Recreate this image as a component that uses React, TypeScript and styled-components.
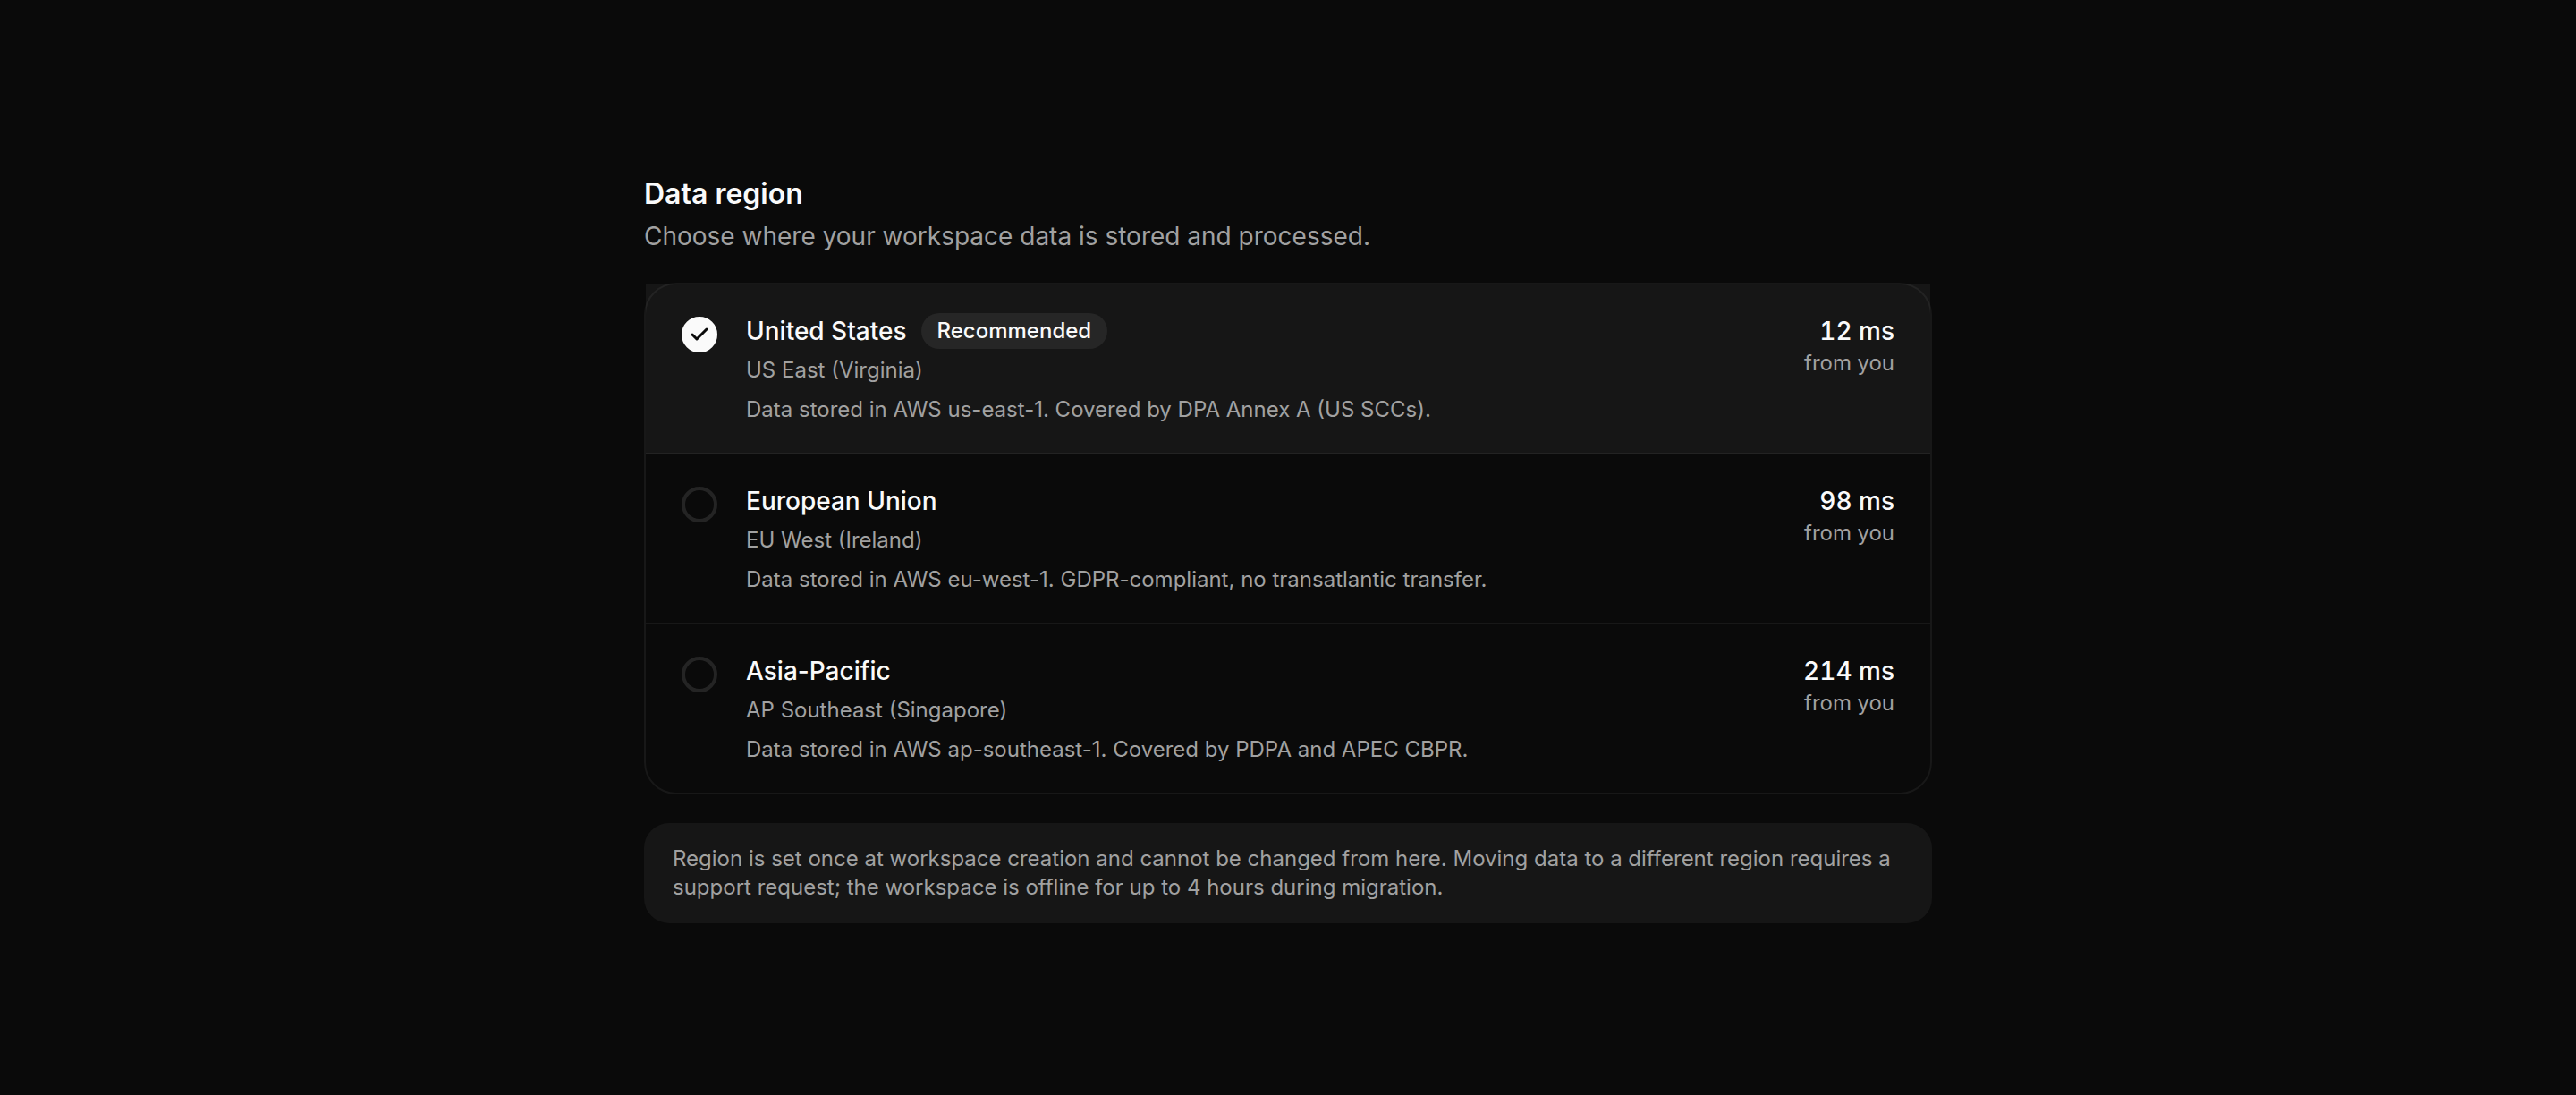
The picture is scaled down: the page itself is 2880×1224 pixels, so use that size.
import React, { useState } from "react";
import styled, { createGlobalStyle } from "styled-components";

const GlobalStyle = createGlobalStyle`
  *, *::before, *::after { box-sizing: border-box; }
  body {
    margin: 0;
    background: #0a0a0a;
    color: #fafafa;
    font-family: Inter, "Liberation Sans", sans-serif;
  }
`;

const Page = styled.main`
  display: flex;
  flex-direction: column;
  justify-content: center;
  min-height: 100vh;
  width: 100%;
  max-width: 1504px;
  margin: 0 auto;
  padding: 32px;
  gap: 32px;
`;

const Header = styled.header`
  display: flex;
  flex-direction: column;
  gap: 2px;
`;

const Title = styled.h1`
  margin: 0;
  font-size: 32px;
  line-height: 50px;
  font-weight: 600;
`;

const Subtitle = styled.p`
  margin: 0;
  font-size: 28px;
  line-height: 40px;
  color: #a1a1a1;
`;

const RegionList = styled.div`
  display: flex;
  flex-direction: column;
  border: 2px solid rgba(255, 255, 255, 0.06);
  border-radius: 36px;
`;

const RegionRow = styled.label<{ $selected: boolean }>`
  display: flex;
  align-items: flex-start;
  gap: 32px;
  padding: 32px 40px;
  cursor: pointer;
  background: ${(p) => (p.$selected ? "rgba(255, 255, 255, 0.05)" : "transparent")};

  &:not(:last-child) {
    border-bottom: 2px solid rgba(255, 255, 255, 0.06);
  }
`;

const RadioSlot = styled.span`
  display: grid;
  flex: none;
  margin-top: 4px;

  & > * {
    grid-area: 1 / 1;
    place-self: center;
  }
`;

const Radio = styled.input`
  appearance: none;
  width: 40px;
  height: 40px;
  margin: 0;
  border: 4px solid #242424;
  border-radius: 50%;
  cursor: pointer;

  &:checked {
    border-color: #fafafa;
    background: #fafafa;
  }
`;

const CheckMark = styled.svg`
  width: 24px;
  height: 24px;
  fill: none;
  stroke: #0a0a0a;
  stroke-width: 3;
  stroke-linecap: round;
  stroke-linejoin: round;
  pointer-events: none;
`;

const Details = styled.span`
  display: flex;
  flex: 1;
  flex-direction: column;
  min-width: 0;
`;

const NameLine = styled.span`
  display: flex;
  align-items: center;
  gap: 16px;
`;

const Strong = styled.span`
  font-size: 28px;
  line-height: 40px;
  font-weight: 500;
`;

const Badge = styled.span`
  padding: 4px 18px;
  border-radius: 20px;
  background: #262626;
  font-size: 24px;
  line-height: 32px;
  font-weight: 500;
`;

const Muted = styled.span`
  font-size: 24px;
  line-height: 32px;
  color: #a1a1a1;
`;

const Location = styled(Muted)`
  margin-top: 8px;
`;

const Storage = styled(Muted)`
  margin-top: 12px;
`;

const Latency = styled.span`
  display: flex;
  flex: none;
  flex-direction: column;
  align-items: flex-end;
  font-variant-numeric: tabular-nums;
`;

const Note = styled.p`
  margin: 0;
  padding: 24px 32px;
  border-radius: 28px;
  background: #161616;
  font-size: 24px;
  line-height: 32px;
  color: #a1a1a1;
`;

type Region = {
  id: string;
  name: string;
  location: string;
  storage: string;
  latency: number;
  recommended?: boolean;
};

const regions: Region[] = [
  {
    id: "us",
    name: "United States",
    location: "US East (Virginia)",
    storage: "Data stored in AWS us-east-1. Covered by DPA Annex A (US SCCs).",
    latency: 12,
    recommended: true,
  },
  {
    id: "eu",
    name: "European Union",
    location: "EU West (Ireland)",
    storage: "Data stored in AWS eu-west-1. GDPR-compliant, no transatlantic transfer.",
    latency: 98,
  },
  {
    id: "ap",
    name: "Asia-Pacific",
    location: "AP Southeast (Singapore)",
    storage: "Data stored in AWS ap-southeast-1. Covered by PDPA and APEC CBPR.",
    latency: 214,
  },
];

export default function App() {
  const [selected, setSelected] = useState("us");

  return (
    <>
      <GlobalStyle />
      <Page>
        <Header>
          <Title id="region-title">Data region</Title>
          <Subtitle>Choose where your workspace data is stored and processed.</Subtitle>
        </Header>
        <RegionList role="radiogroup" aria-labelledby="region-title">
          {regions.map((region) => (
            <RegionRow key={region.id} htmlFor={region.id} $selected={selected === region.id}>
              <RadioSlot>
                <Radio
                  type="radio"
                  id={region.id}
                  name="region"
                  value={region.id}
                  checked={selected === region.id}
                  onChange={() => setSelected(region.id)}
                />
                {selected === region.id && (
                  <CheckMark viewBox="0 0 24 24" aria-hidden="true">
                    <path d="M20 6 9 17l-5-5" />
                  </CheckMark>
                )}
              </RadioSlot>
              <Details>
                <NameLine>
                  <Strong>{region.name}</Strong>
                  {region.recommended && <Badge>Recommended</Badge>}
                </NameLine>
                <Location>{region.location}</Location>
                <Storage>{region.storage}</Storage>
              </Details>
              <Latency>
                <Strong>{region.latency} ms</Strong>
                <Muted>from you</Muted>
              </Latency>
            </RegionRow>
          ))}
        </RegionList>
        <Note>
          Region is set once at workspace creation and cannot be changed from here. Moving data to a
          different region requires a support request; the workspace is offline for up to 4 hours
          during migration.
        </Note>
      </Page>
    </>
  );
}
